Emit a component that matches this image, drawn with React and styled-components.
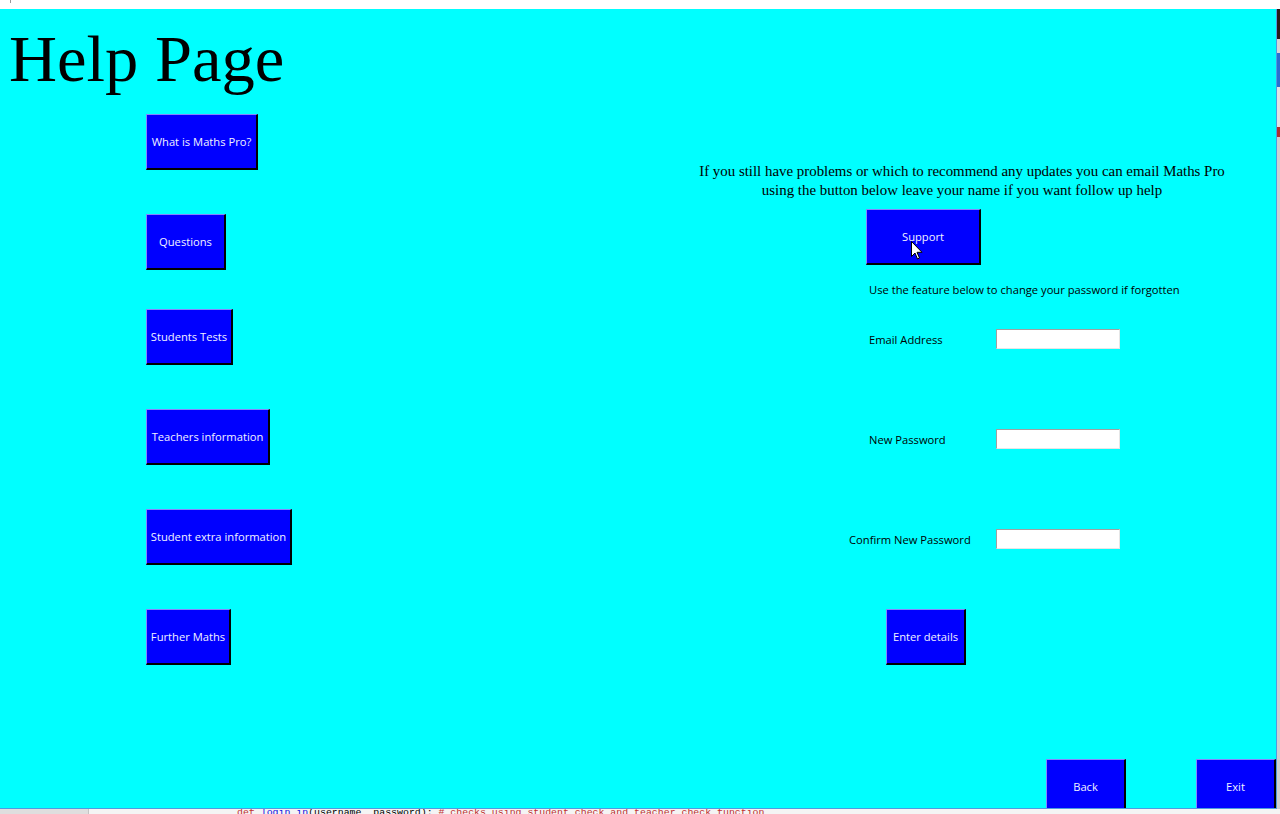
import React from 'react'
import styled, { createGlobalStyle } from 'styled-components'

const Global = createGlobalStyle`
  html, body {
    margin: 0;
    padding: 0;
    background: #f0f0f0;
    overflow: hidden;
  }
`

const Screen = styled.div`
  width: 1280px;
  height: 814px;
  display: flex;
  flex-direction: column;
  overflow: hidden;
`

const TopStrip = styled.div`
  height: 9px;
  flex: none;
  background: #ffffff;
  display: flex;
  padding-left: 10px;

  span {
    width: 1px;
    height: 3px;
    background: #9a9a9a;
  }
`

const Middle = styled.div`
  display: flex;
  height: 800px;
  flex: none;
`

const Window = styled.div`
  width: 1276px;
  height: 799px;
  flex: none;
  background: #00ffff;
  border-right: 1px solid #4f9be0;
  border-bottom: 1px solid #4f9be0;
  display: flex;
  flex-direction: column;
  overflow: hidden;
`

const Edge = styled.div`
  flex: 1;
  display: flex;
  flex-direction: column;
  background: #cfcfcf;
`

const EdgeBit = styled.div`
  height: ${p => p.h}px;
  background: ${p => p.c};
`

const Header = styled.div`
  height: 100px;
  flex: none;
  padding: 17px 0 0 9px;
  box-sizing: border-box;
`

const Title = styled.h1`
  margin: 0;
  font-family: "Liberation Serif", "Times New Roman", serif;
  font-weight: normal;
  font-size: 66.5px;
  line-height: 66px;
  color: #000;
`

const Body = styled.div`
  display: flex;
  flex: none;
`

const LeftCol = styled.div`
  width: 690px;
  box-sizing: border-box;
  padding-left: 146px;
  display: flex;
  flex-direction: column;
  align-items: flex-start;
`

const RightCol = styled.div`
  flex: 1;
  display: flex;
  flex-direction: column;
  align-items: flex-start;
`

const Button = styled.div`
  position: relative;
  box-sizing: border-box;
  width: ${p => p.w}px;
  height: 56px;
  flex: none;
  margin-top: ${p => p.mt || 0}px;
  margin-left: ${p => p.ml || 0}px;
  background: #0000ff;
  border-style: solid;
  border-width: 1px 2px 2px 1px;
  border-color: #8585ff #000 #000 #8585ff;
  display: flex;
  align-items: center;
  justify-content: center;
  font-family: "Open Sans", "Noto Sans", sans-serif;
  font-size: 11.2px;
  color: #f2f2ff;
  white-space: nowrap;
`

const Notice = styled.p`
  margin: 53px 0 0 0;
  width: 544px;
  font-family: "Liberation Serif", "Times New Roman", serif;
  font-size: 14.9px;
  line-height: 19px;
  text-align: center;
  color: #000;
`

const Hint = styled.div`
  margin: 17px 0 0 179px;
  font-family: "Open Sans", "Noto Sans", sans-serif;
  font-size: 11.2px;
  line-height: 16px;
  color: #000;
`

const Form = styled.div`
  margin: 31px 0 0 159px;
  display: grid;
  grid-template-columns: 147px 124px;
  row-gap: 80px;
  align-items: center;
`

const Label = styled.div`
  padding-left: ${p => p.indent || 0}px;
  padding-top: 1px;
  font-family: "Open Sans", "Noto Sans", sans-serif;
  font-size: 11.2px;
  line-height: 16px;
  color: #000;
  white-space: nowrap;
`

const Entry = styled.div`
  width: 124px;
  height: 20px;
  box-sizing: border-box;
  background: #fff;
  border-style: solid;
  border-width: 1px;
  border-color: #a0a0a0 #e6e6e6 #e6e6e6 #a0a0a0;
`

const Footer = styled.div`
  margin-top: auto;
  height: 49px;
  flex: none;
  display: flex;
  justify-content: flex-end;
  align-items: flex-start;
  gap: 70px;
`

const Pointer = styled.svg`
  position: absolute;
  left: 44px;
  top: 31px;
`

const BottomStrip = styled.div`
  height: 5px;
  flex: none;
  display: flex;
  overflow: hidden;
  background: #f4f4f4;
`

const Gutter = styled.div`
  width: 88px;
  background: #dedede;
  border-right: 1px solid #c4c4c4;
`

const CodeLine = styled.div`
  margin-left: 148px;
  font-family: "Liberation Mono", "Courier New", monospace;
  font-size: 9.9px;
  line-height: 8px;
  white-space: pre;
  color: #000;

  .kw { color: #c03030; }
  .fn { color: #1010e0; }
  .cm { color: #c03030; }
`

const leftButtons = [
  { text: 'What is Maths Pro?', w: 112, mt: 5 },
  { text: 'Questions', w: 80, mt: 44 },
  { text: 'Students Tests', w: 87, mt: 39 },
  { text: 'Teachers information', w: 124, mt: 44 },
  { text: 'Student extra information', w: 146, mt: 44 },
  { text: 'Further Maths', w: 85, mt: 44 },
]

const fields = [
  { text: 'Email Address', indent: 20 },
  { text: 'New Password', indent: 20 },
  { text: 'Confirm New Password', indent: 0 },
]

export default function App() {
  return (
    <Screen>
      <Global />
      <TopStrip><span /></TopStrip>
      <Middle>
        <Window>
          <Header>
            <Title>Help Page</Title>
          </Header>
          <Body>
            <LeftCol>
              {leftButtons.map(b => (
                <Button key={b.text} w={b.w} mt={b.mt}>{b.text}</Button>
              ))}
            </LeftCol>
            <RightCol>
              <Notice>
                If you still have problems or which to recommend any updates you can email Maths Pro
                <br />
                using the button below leave your name if you want follow up help
              </Notice>
              <Button w={115} mt={9} ml={176}>
                Support
                <Pointer width="12" height="19" viewBox="0 0 12 19">
                  <path d="M0.5 0.5 L0.5 15.5 L4 12 L6.5 18 L8.5 17 L6 11.3 L11 11.3 Z" fill="#fff" stroke="#000" strokeWidth="1" />
                </Pointer>
              </Button>
              <Hint>Use the feature below to change your password if forgotten</Hint>
              <Form>
                {fields.map(f => (
                  <React.Fragment key={f.text}>
                    <Label indent={f.indent}>{f.text}</Label>
                    <Entry />
                  </React.Fragment>
                ))}
              </Form>
              <Button w={80} mt={60} ml={196}>Enter details</Button>
            </RightCol>
          </Body>
          <Footer>
            <Button w={80}>Back</Button>
            <Button w={80}>Exit</Button>
          </Footer>
        </Window>
        <Edge>
          <EdgeBit h={30} c="#2a1a1a" />
          <EdgeBit h={14} c="#d6d6d6" />
          <EdgeBit h={34} c="#2a6fd0" />
          <EdgeBit h={40} c="#e2e2e2" />
          <EdgeBit h={10} c="#b03030" />
        </Edge>
      </Middle>
      <BottomStrip>
        <Gutter />
        <CodeLine>
          <span className="kw">def</span> <span className="fn">login_in</span>(username, password): <span className="cm"># checks using student check and teacher check function</span>
        </CodeLine>
      </BottomStrip>
    </Screen>
  )
}
